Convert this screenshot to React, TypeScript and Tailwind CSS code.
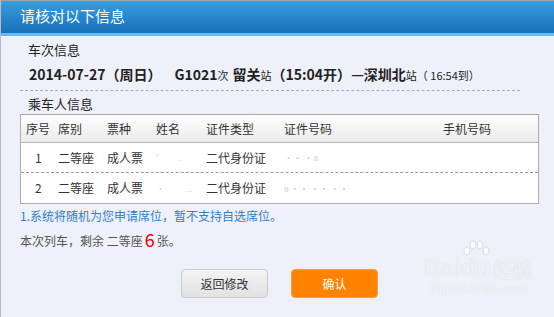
import React from 'react';

const cols = 'grid grid-cols-[32px_49px_49px_50px_78px_159px_1fr] pl-[5px] items-center';

const passengers = [
  { no: '1', seat: '二等座', ticket: '成人票', idType: '二代身份证' },
  { no: '2', seat: '二等座', ticket: '成人票', idType: '二代身份证' },
];

const App = () => {
  return (
    <div className="w-[554px] h-[317px] overflow-hidden bg-[#eef1f9] font-['Noto_Sans_CJK_SC',sans-serif] text-[#222] relative border-l border-[#b9bcc2]">
      {/* Header */}
      <div className="h-[36px] border-t border-[#9fa3a8] bg-gradient-to-b from-[#3a9ee0] to-[#1670b9] border-b-[3px] border-b-[#66bdec] flex items-center pl-[19px]">
        <span className="text-white text-[15px] leading-none -mt-[3px]">请核对以下信息</span>
      </div>

      <div className="pl-[19px] pr-[16px]">
        {/* Train info */}
        <div className="pl-[8px] text-[13px] leading-none mt-[6px] h-[14px] flex items-center">车次信息</div>
        <div className="pl-[9px] mt-[11px] h-[14px] flex items-baseline text-[14px] font-bold leading-none whitespace-nowrap">
          <span>2014-07-27（周日）</span>
          <span className="ml-[13px]">G1021</span>
          <span className="text-[11px] font-normal">次</span>
          <span className="ml-[4px]">留关</span>
          <span className="text-[11px] font-normal">站</span>
          <span>（15:04开）</span>
          <span>—深圳北</span>
          <span className="text-[11px] font-normal">站</span>
          <span className="text-[11px] font-normal">（ 16:54到）</span>
        </div>
        <div className="mt-[9px] w-[500px] border-t border-dashed border-[#a8aab0]"></div>
        <div className="pl-[8px] text-[13px] leading-none mt-[5px] h-[14px] flex items-center">乘车人信息</div>

        {/* Passenger table */}
        <div className="mt-[4px] w-[519px] border border-[#a9abae] bg-white text-[12px] leading-none text-[#333]">
          <div className={`${cols} h-[28px] bg-gradient-to-b from-white to-[#ebebeb] border-b border-[#b5b7ba]`}>
            <span>序号</span>
            <span>席别</span>
            <span>票种</span>
            <span>姓名</span>
            <span>证件类型</span>
            <span>证件号码</span>
            <span>手机号码</span>
          </div>
          {passengers.map((p, i) => (
            <div
              key={p.no}
              className={`${cols} h-[30px] ${i === 0 ? 'border-b border-dashed border-[#999]' : ''}`}
            >
              <span className="pl-[9px]">{p.no}</span>
              <span>{p.seat}</span>
              <span>{p.ticket}</span>
              <span className="text-[#d8d8d8] text-[9px] flex gap-[20px]">
                <span>{i === 0 ? '′' : '·'}</span>
                <span>{i === 0 ? '.' : '...'}</span>
              </span>
              <span>{p.idType}</span>
              <span className="text-[#cfcfcf] text-[9px]">{i === 0 ? '·· ·a' : 'ɞ         ·· ·· ··'}</span>
              <span className="text-[#dcdcdc] text-[9px] pl-[95px]">{i === 1 ? '-' : ''}</span>
            </div>
          ))}
        </div>

        {/* Notices */}
        <div className="mt-[5px] text-[12px] leading-none text-[#2f7ed0] h-[14px] flex items-center">
          1.系统将随机为您申请席位，暂不支持自选席位。
        </div>
        <div className="mt-[8px] text-[12px] leading-none text-[#555] h-[16px] flex items-end whitespace-nowrap">
          <span>本次列车，剩余 二等座</span>
          <span className="text-[#e60000] text-[18px] leading-none mx-[2px] -mb-[1px]">6</span>
          <span>张。</span>
        </div>

        {/* Buttons */}
        <div className="mt-[22px] flex gap-[23px] pl-[161px]">
          <button className="w-[87px] h-[29px] rounded-[4px] border border-[#c9cacd] bg-gradient-to-b from-[#f3f3f3] to-[#e2e2e2] text-[12px] text-[#333]">
            返回修改
          </button>
          <button className="w-[87px] h-[29px] rounded-[4px] border border-[#f7a04a] bg-[#ff8200] text-[12px] text-white">
            确认
          </button>
        </div>
      </div>

      {/* Baidu watermark */}
      <div className="absolute left-[423px] top-[256px] flex flex-col items-center pointer-events-none select-none">
        <div className="flex items-end font-['Liberation_Sans',sans-serif] font-bold text-[24px] leading-none text-white/70 [text-shadow:0_0_1px_#c9ccd6]">
          <span>Bai</span>
          <span className="relative">
            <svg className="absolute -top-[17px] left-[0px]" width="30" height="18" viewBox="0 0 30 18">
              <ellipse cx="6" cy="12" rx="3" ry="4" fill="#ffffff" fillOpacity="0.75" stroke="#d5d8e0" strokeWidth="0.8" />
              <ellipse cx="12" cy="6" rx="3" ry="4" fill="#ffffff" fillOpacity="0.75" stroke="#d5d8e0" strokeWidth="0.8" />
              <ellipse cx="19" cy="6" rx="3" ry="4" fill="#ffffff" fillOpacity="0.75" stroke="#d5d8e0" strokeWidth="0.8" />
              <ellipse cx="25" cy="12" rx="3" ry="4" fill="#ffffff" fillOpacity="0.75" stroke="#d5d8e0" strokeWidth="0.8" />
            </svg>
            du
          </span>
          <span className="font-['Noto_Sans_CJK_SC',sans-serif] text-[20px] ml-[2px]">经验</span>
        </div>
        <div className="mt-[3px] font-['Liberation_Sans',sans-serif] text-[12px] leading-none text-white/80 [text-shadow:0_0_1px_#c9ccd6]">
          jingyan.baidu.com
        </div>
      </div>
    </div>
  );
};

export default App;
